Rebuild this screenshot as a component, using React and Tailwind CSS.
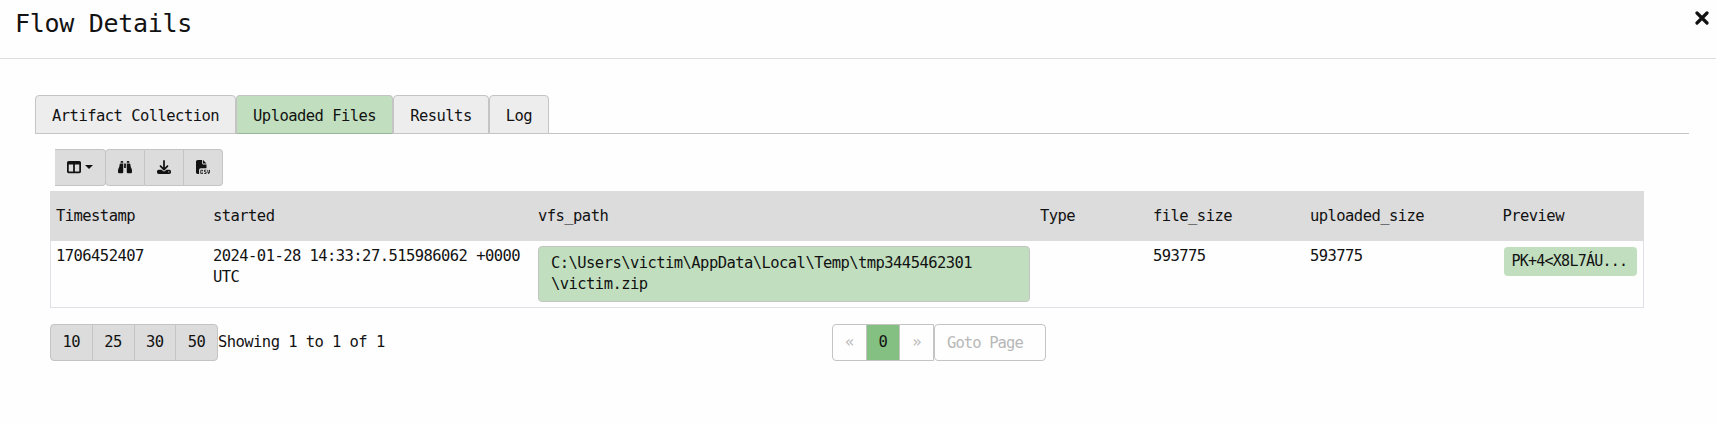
import { FaBinoculars, FaDownload, FaFileCsv, FaTableColumns } from "react-icons/fa6";

const TABS = [
  { label: "Artifact Collection" },
  { label: "Uploaded Files", active: true },
  { label: "Results" },
  { label: "Log" },
];

const COLUMNS = [
  "Timestamp",
  "started",
  "vfs_path",
  "Type",
  "file_size",
  "uploaded_size",
  "Preview",
];

const GRID = "grid grid-cols-[157px_325px_502px_113px_157px_192.5px_minmax(0,1fr)]";

function Header() {
  return (
    <header className="flex h-[59px] items-start justify-between border-b border-[#dedede] pl-[15px] pr-[7px]">
      <h1 className="pt-2 text-[25px] leading-[32px] tracking-[-0.3px]">Flow Details</h1>
      <button aria-label="Close" className="mt-[11px]">
        <svg width="14" height="14" viewBox="0 0 14 14" stroke="#121212" strokeWidth="3.2" strokeLinecap="round">
          <path d="M2 2l10 10M12 2L2 12" />
        </svg>
      </button>
    </header>
  );
}

function Tabs() {
  return (
    <nav className="flex h-[39px] border-b border-[#c4c4c4]">
      {TABS.map((t) => (
        <button
          key={t.label}
          className={
            "-mb-px h-[39px] rounded-t border px-4 pt-[3px] tracking-[-0.54px] " +
            (t.active ? "border-[#c4c4c4] border-b-[#9bb59b] bg-[#c1dfbf]" : "border-[#c4c4c4] bg-[#ededed]")
          }
        >
          {t.label}
        </button>
      ))}
    </nav>
  );
}

function Toolbar() {
  return (
    <div className="ml-[5px] flex h-[37px] w-[168px] text-sm [&>button]:flex [&>button]:items-center [&>button]:justify-center [&>button]:border-[#c4c4c4] [&>button]:bg-[#dcdcdc] [&>button]:pb-px">
      <button className="w-[51px] gap-1 rounded-r border-y border-r">
        <FaTableColumns />
        <svg width="8" height="4" viewBox="0 0 8 4">
          <path d="M0 0h8L4 4z" fill="#121212" />
        </svg>
      </button>
      <button className="-ml-px w-10 rounded-l border"><FaBinoculars /></button>
      <button className="w-[39px] border-y border-r"><FaDownload /></button>
      <button className="w-[39px] rounded-r border-y border-r"><FaFileCsv /></button>
    </div>
  );
}

function Table() {
  return (
    <div className="mt-[5px] w-[1594px]">
      <div className={GRID + " h-[50px] items-center bg-[#dcdcdc] pl-1.5 pt-px"}>
        {COLUMNS.map((c) => (
          <div key={c}>{c}</div>
        ))}
      </div>
      <div className={GRID + " h-[67px] border-x border-b border-[#dee2e6] pl-[5px] pt-[5px]"}>
        <div>1706452407</div>
        <div>2024-01-28 14:33:27.515986062 +0000<br />UTC</div>
        <div className="h-14 w-[492px] rounded border border-[#c4c4c4] bg-[#c1dfbf] px-3 py-1.5">
          C:\Users\victim\AppData\Local\Temp\tmp3445462301<br />\victim.zip
        </div>
        <div />
        <div>593775</div>
        <div>593775</div>
        <div className="ml-px mt-px h-[29px] w-[133px] rounded bg-[#c1dfbf] px-2 pt-1 text-[15px] tracking-[-0.76px]">
          PK+4&lt;X8L7ÁU...
        </div>
      </div>
    </div>
  );
}

function Footer() {
  return (
    <div className="mt-4 flex h-[37px] items-center">
      <div className="flex h-full w-[168px] divide-x divide-[#c4c4c4] overflow-hidden rounded border border-[#c4c4c4] bg-[#dcdcdc]">
        {["10", "25", "30", "50"].map((n) => (
          <button key={n} className="flex-1">{n}</button>
        ))}
      </div>
      <span>Showing 1 to 1 of 1</span>
      <div className="ml-auto mr-[643px] flex h-full">
        <div className="flex w-[102px] divide-x divide-[#c4c4c4] overflow-hidden rounded-l border border-[#c4c4c4] text-[#b8b8b8]">
          <button className="flex-1">«</button>
          <button className="flex-1 bg-[#84c082] text-[#121212]">0</button>
          <button className="flex-1">»</button>
        </div>
        <input
          placeholder="Goto Page"
          className="w-28 rounded border border-[#c4c4c4] px-3 pt-0.5 tracking-[-0.9px] placeholder:text-[#b8b8b8]"
        />
      </div>
    </div>
  );
}

export default function App() {
  return (
    <main className="h-[423px] overflow-hidden bg-[#fefefe] font-['DejaVu_Sans_Mono',monospace] text-[15.5px] leading-[21px] tracking-[-0.56px] text-[#121212]">
      <Header />
      <div className="pl-[35px] pr-[27px] pt-9">
        <Tabs />
        <div className="pl-[15px] pt-[15px]">
          <Toolbar />
          <Table />
          <Footer />
        </div>
      </div>
    </main>
  );
}
